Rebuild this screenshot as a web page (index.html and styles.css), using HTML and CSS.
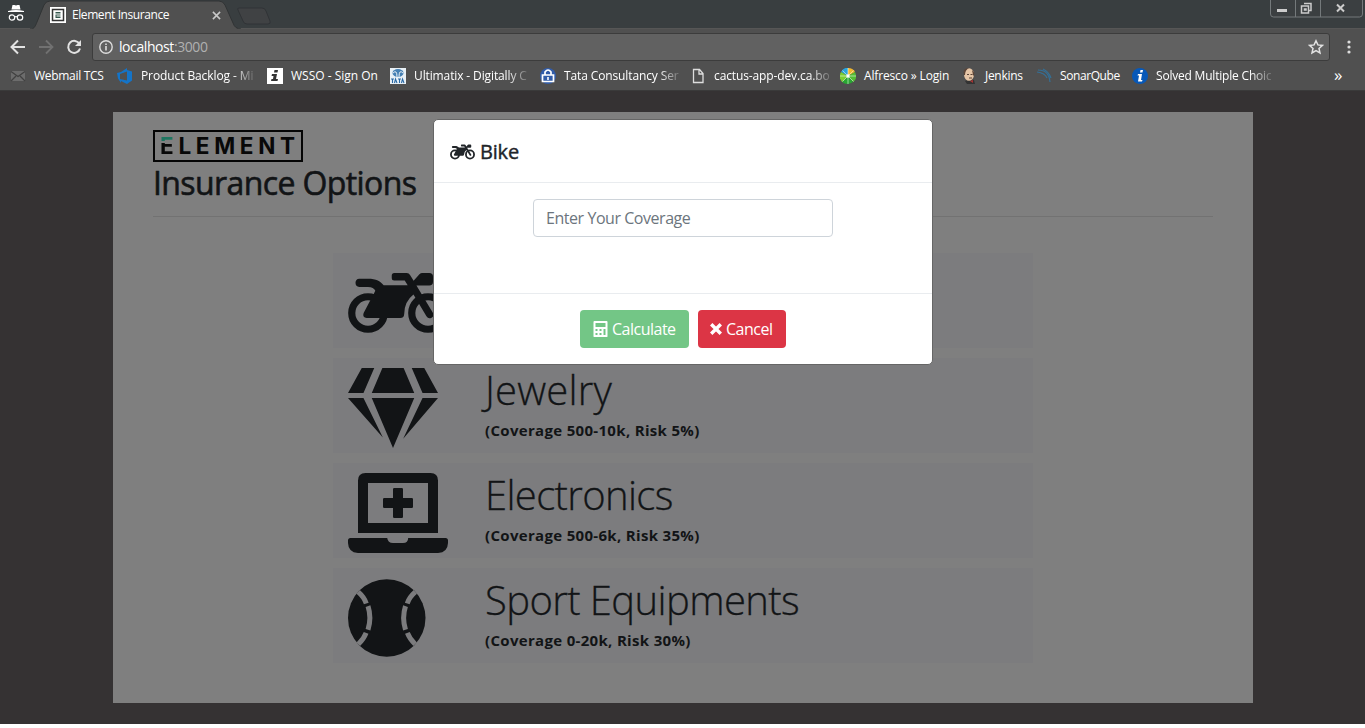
FILE: index.html
```html
<!DOCTYPE html>
<html lang="en">
<head>
<meta charset="utf-8">
<title>Element Insurance</title>
<link rel="stylesheet" href="styles.css">
</head>
<body>
<svg class="defs" aria-hidden="true">
  <symbol id="motorcycle" viewBox="0 0 640 512">
    <g fill="none" stroke="currentColor" stroke-width="46"><circle cx="128" cy="320" r="104"/><circle cx="512" cy="320" r="104"/></g>
    <path fill="currentColor" d="M72 100h56c52 0 82 17 100 43h154l-19-31h-67q-16 0-16-16V80q0-16 16-16h80q14 0 21 12l23 37 37-41q8-8 18-8h45q24 0 24 24v32q0 24-24 24h-82l105 175q12 20-8 31-20 12-33-9l-83-139q-57 44-59 121 0 29-26 29H120q-30-4-20-32l75-142q-10-25-47-25H72q-24-2-24-26t24-26z"/>
  </symbol>
</svg>
<header class="chrome">
  <div class="tabstrip">
    <svg class="incognito" viewBox="0 0 16 18"><path fill="#fff" d="M4.500 0h2l1.500.6L9.500 0h2l1 4.500h-9zM0 6q8-2 16 0v1H0z"/><g fill="none" stroke="#fff" stroke-width="1.200"><circle cx="4" cy="12.500" r="2.700"/><circle cx="12" cy="12.500" r="2.700"/><path d="M6.700 12q1.300-1 2.600 0"/></g></svg>
    <div class="tab">
      <svg class="tabshape" viewBox="0 0 212 29"><path fill="#505050" stroke="#303334" d="M0 29C4 29 5 27 7 22L14 5q2-4 6-4h169q4 0 6 4l8 18q2 6 8 6"/></svg>
      <div class="tabrow">
        <svg class="favicon" viewBox="0 0 16 16"><path fill="#fff" d="M0 0h16v16H0z"/><path fill="none" stroke="#333" stroke-width="1.500" d="M2.500 2.500h11v11h-11z"/><path fill="#34564c" d="M5.500 5h5v1.500h-5zM5.500 7.500h5v1h-4v1h4V11h-5z"/></svg>
        <span class="tabtitle">Element Insurance</span>
        <svg class="tabclose" viewBox="0 0 10 10"><path stroke="#c8c8c8" stroke-width="1.700" d="M1 1l8 8M9 1L1 9"/></svg>
      </div>
    </div>
    <svg class="newtab" viewBox="0 0 36 18"><path fill="#404244" stroke="#303336" d="M3 1h23q3 0 4 3l4 10q1 3-2 3H11q-3 0-4-3L2 3q-1-2 1-2z"/></svg>
    <svg class="winbtns" viewBox="0 0 93 18"><path fill="#3b3f41" stroke="#74797b" d="M.5 0v14q0 3 3 3h86q3 0 3-3V0M25.500 0v17M50.500 0v17"/><path fill="#ccc" d="M7 9h10v3H7z"/><path fill="none" stroke="#ccc" stroke-width="1.500" d="M34 3.500h7v7h-2M31.500 6h7v7h-7zM34.500 9h1.500v1h-1.500z"/><path fill="none" stroke="#ccc" stroke-width="2" d="M67 4.500l7 7M74 4.500l-7 7"/></svg>
  </div>
  <div class="toolbar">
    <svg class="nav" viewBox="0 0 16 16"><path d="M15 8H2M8 1.500L1.500 8 8 14.500" fill="none" stroke="#e2e2e2" stroke-width="2"/></svg>
    <svg class="nav" viewBox="0 0 16 16"><path d="M1 8h13M8 1.500L14.500 8 8 14.500" fill="none" stroke="#717171" stroke-width="1.800"/></svg>
    <svg class="nav" viewBox="0 0 16 16"><path d="M13.500 5A6 6 0 1 0 14 9.500" fill="none" stroke="#e2e2e2" stroke-width="2"/><path fill="#e2e2e2" d="M15 1v6H9z"/></svg>
    <div class="omnibox">
      <svg class="info" viewBox="0 0 14 14"><circle cx="7" cy="7" r="6.200" fill="none" stroke="#ddd" stroke-width="1.400"/><path fill="#ddd" d="M6.200 6h1.600v4.500H6.200zM6.200 3.400h1.600V5H6.200z"/></svg>
      <span class="url">localhost<span class="port">:3000</span></span>
      <svg class="star" viewBox="0 0 16 16"><path fill="none" stroke="#e2e2e2" stroke-width="1.500" d="M8 1.800l1.900 4.100 4.500.5-3.400 3 1 4.500L8 11.600l-4 2.300 1-4.500-3.400-3 4.500-.5z"/></svg>
    </div>
    <svg class="dots" viewBox="0 0 4 14"><g fill="#ddd"><circle cx="2" cy="2" r="1.600"/><circle cx="2" cy="7" r="1.600"/><circle cx="2" cy="12" r="1.600"/></g></svg>
  </div>
  <nav class="bookmarks">
    <div class="bm"><svg viewBox="0 0 16 16"><path fill="#6c6c6c" d="M1 3h14v10H1z"/><path fill="none" stroke="#414141" stroke-width="1.300" d="M1 3.500l7 5 7-5M1 13l5-5M15 13l-5-5"/></svg><span>Webmail TCS</span></div>
    <div class="bm fade"><svg viewBox="0 0 16 16"><path fill="#1474c8" fill-rule="evenodd" d="M0 5l4-1 6-4v2l5 1.500v9L10 16l-6-3v2L1 10.500zM3 6v5l7 1.500v-9z"/></svg><span class="t2">Product Backlog - Mi</span></div>
    <div class="bm"><svg viewBox="0 0 16 16"><path fill="#fff" d="M0 0h16v16H0z"/><path fill="#333" d="M7.500 2h3.500l-.5 2.500H7zM5 6h5l-1 5h2l-.5 2H4l.5-2H6l.5-3H4.500z"/></svg><span class="t3">WSSO - Sign On</span></div>
    <div class="bm fade"><svg viewBox="0 0 16 16"><path fill="#e8f0f6" d="M0 0h16v16H0z"/><ellipse cx="8" cy="5" rx="5.500" ry="4" fill="#4480b4"/><path fill="none" stroke="#e8f0f6" d="M3 5q4-4 4 4M13 5Q9 1 9 9"/><path fill="none" stroke="#2868a4" stroke-width="1.100" d="M1 11h3M2.500 11v4M4.500 15l1-4 1.500 4M8 11h3M9.500 11v4M11.500 15l1-4 1.500 4"/></svg><span class="t4">Ultimatix - Digitally C</span></div>
    <div class="bm fade"><svg viewBox="0 0 16 16"><circle cx="8" cy="8" r="8" fill="#315ca9"/><path fill="none" stroke="#fff" stroke-width="1.700" d="M5 7V4q3-4 6 0v3M2.500 7h11v6.500h-11z"/><path fill="#fff" d="M7.200 9h1.600v3H7.200z"/></svg><span class="t4">Tata Consultancy Ser</span></div>
    <div class="bm fade"><svg viewBox="0 0 16 16"><path fill="none" stroke="#ddd" stroke-width="1.300" d="M3.500 1.500h6l3.500 4v9H3.500zM9 1.500V6h4"/></svg><span class="t4">cactus-app-dev.ca.bo</span></div>
    <div class="bm"><svg viewBox="0 0 16 16"><path fill="#28a5df" d="M8 8L1 4Q4-1 8 0z"/><path fill="#f2b72e" d="M8 8V0q5 0 7 4z"/><path fill="#55bd34" d="M8 8l7-4q3 7-2 10z"/><path fill="#29a733" d="M8 8l5 6q-6 4-11 0z"/><path fill="#7cce32" d="M8 8l-6 6Q-2 9 1 4z"/><path fill="none" stroke="#e9f8e8" stroke-width=".6" d="M8 0v16M0 8h16M2.500 2.500l11 11M13.500 2.500l-11 11"/><circle cx="8" cy="8" r="1.700" fill="#fff"/></svg><span class="t7">Alfresco » Login</span></div>
    <div class="bm"><svg viewBox="0 0 16 16"><path fill="#333" d="M4 13l4-2 5 1 1 4H6z"/><ellipse cx="8" cy="6.500" rx="5" ry="6.300" fill="#e5c5a6"/><path fill="#5b4437" d="M3 7Q1 0 8 0 4 2 4 7zM11 2q3 2 2 6l-1-1zM6 6h2v1H6zM9.500 6h2v1h-2zM8 9.500h3v1H8z"/><path fill="#a33" d="M9 13l3-1v3z"/></svg><span>Jenkins</span></div>
    <div class="bm"><svg viewBox="0 0 16 16"><path fill="none" stroke="#356f95" stroke-width="1.200" d="M2 2q11 0 12 12M7 1q6 3 8 9M1 4q8 1 10 6"/></svg><span class="t9">SonarQube</span></div>
    <div class="bm fade"><svg viewBox="0 0 16 16"><circle cx="8" cy="8" r="8" fill="#0758b8"/><path fill="#fff" d="M8.500 2h2.500L10.500 4.500H8zM6 6h4L9 12h1.500l-.5 1.500H6L7 7.500H5.500z"/></svg><span class="t10">Solved Multiple Choic</span></div>
    <span class="more">»</span>
  </nav>
</header>
<main class="page-bg">
  <section class="panel">
    <div class="logo"><span class="e1">E</span>LEMENT</div>
    <h1>Insurance Options</h1>
    <hr>
    <div class="list">
      <article class="row"><svg class="icon wide"><use href="#motorcycle"/></svg></article>
      <article class="row">
        <svg class="icon" viewBox="0 0 576 512"><path fill="currentColor" d="M88 0h80L99 160H0zM220 0h136l68 160H152zM408 0h80l88 160h-99zM0 192h99l124 252zM152 192h272L288 512zM477 192h99L353 452z"/></svg>
        <div class="info-col"><h2 class="h-jew">Jewelry</h2><p>(Coverage 500-10k, Risk 5%)</p></div>
      </article>
      <article class="row">
        <svg class="icon" viewBox="0 0 640 512"><path fill="currentColor" fill-rule="evenodd" d="M112 0h416q48 0 48 48v336H64V48Q64 0 112 0zM128 64v256h384V64z"/><path fill="currentColor" d="M296 96h48q8 0 8 8v56h56q8 0 8 8v48q0 8-8 8h-56v56q0 8-8 8h-48q-8 0-8-8v-56h-56q-8 0-8-8v-48q0-8 8-8h56v-56q0-8 8-8zM16 416h235q4 32 37 32h64q33 0 33-32h239q16 0 16 16v16q-2 60-64 64H64Q2 508 0 448v-16q0-16 16-16z"/></svg>
        <div class="info-col"><h2 class="h-ele">Electronics</h2><p>(Coverage 500-6k, Risk 35%)</p></div>
      </article>
      <article class="row">
        <svg class="icon" viewBox="0 0 496 512"><circle cx="248" cy="256" r="248" fill="currentColor"/><g fill="none" stroke="#7c7c7e" stroke-width="32"><path d="M65 89q39 34 52 74M128 180q24 74 0 151M116 351q-15 39-50 73M431 89q-39 34-52 74M368 180q-24 74 0 151M380 351q15 39 50 73"/></g></svg>
        <div class="info-col"><h2 class="h-spo">Sport Equipments</h2><p>(Coverage 0-20k, Risk 30%)</p></div>
      </article>
    </div>
  </section>
  <div class="modal">
    <div class="m-head"><svg class="m-icon"><use href="#motorcycle"/></svg><span>Bike</span></div>
    <div class="m-body"><div class="field">Enter Your Coverage</div></div>
    <div class="m-foot">
      <button class="btn calc"><svg viewBox="0 0 448 512"><path fill="#fff" fill-rule="evenodd" d="M28 0h392q28 0 28 28v456q0 28-28 28H28q-28 0-28-28V28Q0 0 28 0zM64 64v128h320V64zM64 256v64h64v-64zM192 256v64h64v-64zM320 256v192h64V256zM64 384v64h64v-64zM192 384v64h64v-64z"/></svg><span>Calculate</span></button>
      <button class="btn cancel"><svg viewBox="0 0 12 12"><path stroke="#fff" stroke-width="3.400" d="M1.200 1.200l9.600 9.600M10.800 1.200l-9.600 9.600"/></svg><span>Cancel</span></button>
    </div>
  </div>
</main>
</body>
</html>
```
FILE: styles.css
```css
* { box-sizing: border-box; }
body { margin: 0; height: 728px; overflow: hidden; background: #fff; font-family: "Open Sans", "Noto Sans", sans-serif; }
svg { display: block; flex: none; }
.defs { position: absolute; width: 0; height: 0; }
.chrome { height: 91px; background: #505050; border-bottom: 1px solid #3a3a3a; color: #fff; }
.tabstrip { height: 28px; display: flex; background: #393e40; }
.incognito { width: 16px; height: 18px; margin: 5px 0 0 8px; }
.tab { width: 206px; height: 29px; margin-left: 9px; position: relative; }
.tabshape { position: absolute; top: 0; left: -3px; width: 212px; height: 29px; }
.tabrow { position: relative; display: flex; align-items: center; height: 30px; padding-left: 17px; }
.favicon { width: 16px; height: 16px; }
.tabtitle { font-size: 12px; margin: -1px 0 0 6px; width: 140px; letter-spacing: -0.42px; }
.tabclose { width: 9px; height: 9px; }
.newtab { width: 36px; height: 18px; margin: 7px 0 0 -3px; }
.winbtns { width: 93px; height: 18px; margin-left: auto; margin-right: 2px; }
.toolbar { height: 34px; padding: 3px 0 0 10px; display: flex; align-items: center; border-top: 1px solid #565656; }
.nav { width: 16px; height: 16px; margin-right: 12px; }
.omnibox { width: 1238px; height: 28px; margin-left: -2px; padding: 0 5px 0 6px; display: flex; align-items: center; background: #616161; border: 1px solid #3c3c3c; border-radius: 3px; }
.info { width: 14px; height: 14px; }
.url { font-size: 14px; margin: -1px 0 0 6px; letter-spacing: -0.42px; }
.port { color: #b0b0b0; }
.star { width: 16px; height: 16px; margin-left: auto; }
.dots { width: 4px; height: 14px; margin-left: 17px; }
.bookmarks { height: 28px; display: grid; grid-template-columns: 107px 150px 123px 150px 150px 150px 121px 75px 96px 202px auto; align-items: center; padding-left: 10px; font-size: 12px; white-space: nowrap; }
.bm { display: flex; align-items: center; }
.bm svg { width: 16px; height: 16px; margin-right: 8px; }
.bm.fade span { -webkit-mask-image: linear-gradient(to right, #000 82%, transparent 104%); mask-image: linear-gradient(to right, #000 82%, transparent 104%); }
.bm span { letter-spacing: -0.3px; margin-top: -1px; }
.bm .t2 { letter-spacing: -0.1px; }
.bm .t3 { letter-spacing: 0; }
.bm .t4 { letter-spacing: -0.12px; }
.bm .t7 { letter-spacing: -0.15px; }
.bm .t9 { letter-spacing: -0.42px; }
.bm .t10 { letter-spacing: -0.2px; }
.more { font-size: 17px; line-height: 20px; margin-top: -3px; }
.page-bg { height: 633px; background: #353233; position: relative; padding-top: 21px; }
.panel { width: 1140px; height: 591px; margin: 0 auto 0 113px; background: #7f7f7f; padding: 18px 40px 0; color: #121416; }
.logo { width: 150px; height: 32px; border: 2px solid #050505; padding-left: 5px; font: 700 22.5px/28px Inter, sans-serif; letter-spacing: 4.7px; white-space: nowrap; color: #080808; }
.e1 { color: transparent; background: linear-gradient(#1e7560 0 9px, #7f7f7f 9px 11px, #080808 11px); -webkit-background-clip: text; background-clip: text; }
h1 { margin: 0; font-size: 32px; font-weight: 500; line-height: 38px; height: 54px; padding-top: 2px; letter-spacing: -0.6px; -webkit-text-stroke: 0.6px currentColor; }
hr { margin: 0; border: 0; height: 1px; background: #727272; }
.list { width: 700px; margin: 36px auto 0; display: grid; gap: 10px; }
.row { height: 95px; background: #7c7c7e; display: grid; grid-template-columns: 137px auto; padding: 10px 0 0 15px; }
.icon { height: 80px; width: auto; }
.icon.wide { width: 100px; }
h2 { margin: -2px 0 0; font-size: 40px; line-height: 48px; font-weight: 300; white-space: nowrap; -webkit-text-stroke: 0.3px currentColor; }
.h-jew { letter-spacing: 0.2px; }
.h-ele { letter-spacing: -0.65px; }
.h-spo { letter-spacing: -0.6px; }
.info-col p { margin: 4px 0 0; font-size: 15px; line-height: 24px; font-weight: 700; white-space: nowrap; letter-spacing: 0.32px; }
.modal { position: absolute; left: 433px; top: 28px; width: 500px; height: 246px; background: #fff; border: 1px solid #666; border-radius: 5px; color: #212529; }
.m-head { height: 63px; display: flex; align-items: center; padding: 1px 16px 0; border-bottom: 1px solid #e9ecef; font-size: 20px; font-weight: 500; gap: 5px; letter-spacing: -0.2px; -webkit-text-stroke: 0.4px currentColor; }
.m-icon { width: 25px; height: 20px; }
.m-body { height: 111px; padding-top: 16px; border-bottom: 1px solid #e9ecef; }
.field { width: 300px; height: 38px; margin: 0 auto; border: 1px solid #ced4da; border-radius: 4px; padding: 0 12px; font-size: 16px; line-height: 37px; letter-spacing: -0.45px; color: #6c757d; }
.m-foot { display: flex; justify-content: center; gap: 9px; padding-top: 16px; }
.btn { display: flex; align-items: center; height: 38px; border: 0; border-radius: 4px; padding: 0 12px; color: #fff; font: 16px "Open Sans", sans-serif; white-space: nowrap; gap: 4px; }
.calc { width: 109px; background: #73c686; padding-left: 13px; }
.calc svg { width: 15px; height: 16px; }
.cancel { width: 88px; background: #dc3545; }
.cancel svg { width: 12px; height: 12px; }
.btn span { letter-spacing: -0.5px; }
```
